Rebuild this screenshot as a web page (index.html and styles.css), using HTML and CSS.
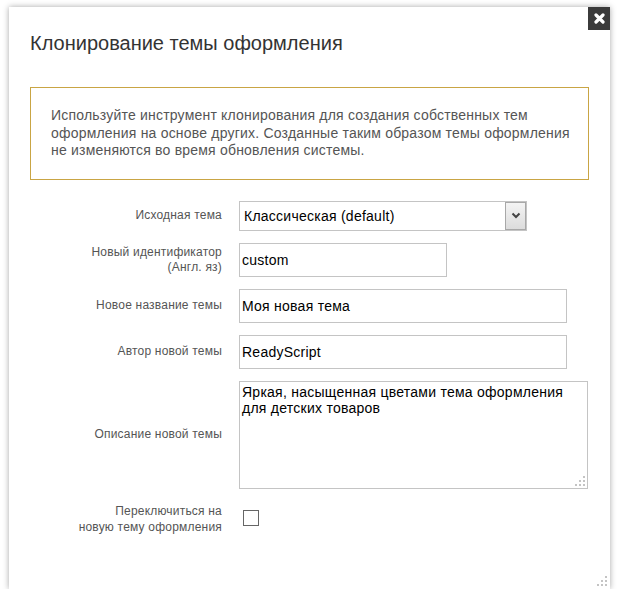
FILE: index.html
```
<!DOCTYPE html>
<html>
    <head>
        <title>Клонирование темы оформления</title>
        <link rel="stylesheet" href="styles.css">
    </head>
    <body>
        <div class="dialog">
            <a class="dialog-close" href="#">
                <svg width="11" height="11" viewBox="0 0 11 11"><path d="M2 2 L9 9 M9 2 L2 9" stroke="#fff" stroke-width="3.2" stroke-linecap="round"/></svg>
            </a>
            <h2 class="dialog-title">Клонирование темы оформления</h2>
            <div class="notice">
                Используйте инструмент клонирования для создания собственных тем<br>
                оформления на основе других. Созданные таким образом темы оформления<br>
                не изменяются во время обновления системы.
            </div>
            <form class="clone-form">
                <label class="form-label">Исходная тема</label>
                <div class="select-box">
                    <span class="select-value">Классическая (default)</span>
                    <span class="select-arrow">
                        <svg width="10" height="7" viewBox="0 0 10 7"><path d="M1.5 1.5 L5 5 L8.5 1.5" fill="none" stroke="#444" stroke-width="2"/></svg>
                    </span>
                </div>

                <label class="form-label">Новый идентификатор<br>(Англ. яз)</label>
                <input type="text" class="text-input input-short" value="custom">

                <label class="form-label">Новое название темы</label>
                <input type="text" class="text-input input-mid" value="Моя новая тема">

                <label class="form-label">Автор новой темы</label>
                <input type="text" class="text-input input-mid" value="ReadyScript">

                <label class="form-label">Описание новой темы</label>
                <div class="area-wrap">
                    <textarea class="text-area">Яркая, насыщенная цветами тема оформления для детских товаров</textarea>
                    <svg class="grip" width="10" height="10" viewBox="0 0 10 10" fill="#c4c4c4"><rect x="8" y="0" width="2" height="2"/><rect x="4" y="4" width="2" height="2"/><rect x="8" y="4" width="2" height="2"/><rect x="0" y="8" width="2" height="2"/><rect x="4" y="8" width="2" height="2"/><rect x="8" y="8" width="2" height="2"/></svg>
                </div>

                <label class="form-label label-check">Переключиться на<br>новую тему оформления</label>
                <div class="check-cell"><input type="checkbox" class="check"></div>
            </form>
            <svg class="dialog-grip" width="10" height="10" viewBox="0 0 10 10" fill="#c4c4c4"><rect x="8" y="0" width="2" height="2"/><rect x="4" y="4" width="2" height="2"/><rect x="8" y="4" width="2" height="2"/><rect x="0" y="8" width="2" height="2"/><rect x="4" y="8" width="2" height="2"/><rect x="8" y="8" width="2" height="2"/></svg>
        </div>
    </body>
</html>
```
FILE: styles.css
```
body{
    margin: 0;
    background: #fff;
    font-family: "Liberation Sans", Arial, sans-serif;
}
.dialog{
    position: relative;
    box-sizing: border-box;
    width: 601px;
    height: 582px;
    margin: 7px 0 0 9px;
    padding: 24px 21px 0 21px;
    background: #fff;
    box-shadow: 0 0 6px rgba(0, 0, 0, 0.35);
}
.dialog-close{
    position: absolute;
    top: 0;
    right: 0;
    width: 22px;
    height: 23px;
    background: #3b3b3b;
    display: flex;
    justify-content: center;
    align-items: center;
}
.dialog-title{
    margin: 0;
    font-size: 20px;
    line-height: 24px;
    font-weight: normal;
    color: #333;
}
.notice{
    margin-top: 32px;
    border: 1px solid #c9a544;
    padding: 19px 10px 19px 20px;
    font-size: 14px;
    line-height: 17.5px;
    letter-spacing: 0.2px;
    color: #555;
}
.clone-form{
    display: grid;
    grid-template-columns: 192px auto;
    column-gap: 17px;
    row-gap: 12px;
    margin-top: 21px;
    align-items: center;
}
.form-label{
    text-align: right;
    font-size: 12px;
    line-height: 15px;
    letter-spacing: 0.2px;
    color: #555;
}
.label-check{
    line-height: 16px;
    padding-top: 2px;
}
.select-box{
    display: flex;
    box-sizing: border-box;
    width: 288px;
    height: 30px;
    border: 1px solid #c4c4c4;
    background: #fff;
}
.select-value{
    flex: 1;
    padding-left: 4px;
    font-size: 14px;
    line-height: 28px;
    letter-spacing: 0.25px;
    color: #000;
}
.select-arrow{
    box-sizing: border-box;
    width: 21px;
    border: 1px solid #a8a8a8;
    background: linear-gradient(#f4f4f4, #dcdcdc);
    display: flex;
    justify-content: center;
    align-items: center;
}
.text-input{
    box-sizing: border-box;
    height: 34px;
    border: 1px solid #c4c4c4;
    padding: 0 2px;
    font-family: "Liberation Sans", Arial, sans-serif;
    font-size: 14px;
    letter-spacing: 0.25px;
    color: #000;
    outline: none;
}
.input-short{
    width: 208px;
}
.input-mid{
    width: 328px;
}
.area-wrap{
    position: relative;
    width: 349px;
    height: 108px;
}
.text-area{
    box-sizing: border-box;
    width: 349px;
    height: 108px;
    margin: 0;
    border: 1px solid #c4c4c4;
    padding: 2px 2px;
    font-family: "Liberation Sans", Arial, sans-serif;
    font-size: 14px;
    line-height: 16px;
    letter-spacing: 0.25px;
    color: #000;
    resize: none;
    outline: none;
    display: block;
}
.grip{
    position: absolute;
    right: 3px;
    bottom: 3px;
}
.check-cell{
    display: flex;
    align-items: center;
}
.check{
    appearance: none;
    -webkit-appearance: none;
    box-sizing: border-box;
    width: 16px;
    height: 16px;
    margin: 0 0 0 4px;
    border: 1px solid #666;
    background: #fff;
}
.dialog-grip{
    position: absolute;
    right: 3px;
    bottom: 3px;
}
```
